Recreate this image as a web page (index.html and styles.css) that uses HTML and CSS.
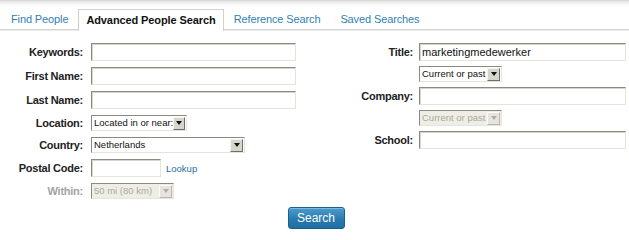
FILE: index.html
```html
<!DOCTYPE html>
<html>
<head>
<meta charset="utf-8">
<link rel="stylesheet" href="styles.css">
</head>
<body>
<div class="tabbar">
  <ul class="tabs">
    <li class="tab"><a href="#">Find People</a></li>
    <li class="tab active"><span>Advanced People Search</span></li>
    <li class="tab"><a href="#">Reference Search</a></li>
    <li class="tab"><a href="#">Saved Searches</a></li>
  </ul>
</div>
<form class="search">
  <div class="columns">
    <div class="col col-left">
      <label class="lbl">Keywords:</label>
      <input class="txt w-wide" type="text">
      <label class="lbl">First Name:</label>
      <input class="txt w-wide" type="text">
      <label class="lbl">Last Name:</label>
      <input class="txt w-wide" type="text">
      <label class="lbl">Location:</label>
      <div class="sel w-loc"><span class="val">Located in or near:</span><span class="btn"><i></i></span></div>
      <label class="lbl">Country:</label>
      <div class="sel w-country"><span class="val">Netherlands</span><span class="btn"><i></i></span></div>
      <label class="lbl">Postal Code:</label>
      <div class="postal"><input class="txt w-postal" type="text"><a class="lookup" href="#">Lookup</a></div>
      <label class="lbl disabled">Within:</label>
      <div class="sel w-small is-disabled"><span class="val">50 mi (80 km)</span><span class="btn"><i></i></span></div>
    </div>
    <div class="col col-right">
      <label class="lbl">Title:</label>
      <input class="txt w-wide2" type="text" value="marketingmedewerker">
      <span></span>
      <div class="sel w-small"><span class="val">Current or past</span><span class="btn"><i></i></span></div>
      <label class="lbl">Company:</label>
      <input class="txt w-wide2" type="text">
      <span></span>
      <div class="sel w-small is-disabled"><span class="val">Current or past</span><span class="btn"><i></i></span></div>
      <label class="lbl">School:</label>
      <input class="txt w-wide2" type="text">
    </div>
  </div>
  <div class="actions">
    <button type="button" class="search-btn">Search</button>
  </div>
</form>
</body>
</html>
```
FILE: styles.css
```css
html, body {
  margin: 0;
  padding: 0;
  background: #fff;
  font-family: "Liberation Sans", Arial, sans-serif;
}

.tabbar {
  height: 29px;
  background: linear-gradient(#d4d4d4 0px, #ececec 2px, #fbfbfb 5px, #fff 8px);
  border-bottom: 1px solid #d2d2d2;
  box-shadow: 0 1px 0 #ececec;
}

.tabs {
  list-style: none;
  margin: 0;
  padding: 9px 0 0 1px;
  display: flex;
  height: 20px;
}

.tab {
  font-size: 11px;
  line-height: 20px;
  padding: 0 10px;
  letter-spacing: -0.12px;
}

.tab a {
  color: #2f7fb4;
  text-decoration: none;
}

.tab.active {
  background: #fff;
  border: 1px solid #d0d0d0;
  border-bottom: none;
  height: 21px;
  padding: 0 7px;
  font-weight: bold;
  color: #111;
  letter-spacing: -0.1px;
}

.search {
  padding-top: 13px;
}

.columns {
  display: flex;
  gap: 34px;
}

.col {
  display: grid;
  align-items: center;
  align-content: start;
}

.col-left {
  grid-template-columns: 83px auto;
  column-gap: 8px;
  row-gap: 6px;
}

.col-right {
  grid-template-columns: 83px auto;
  column-gap: 6px;
  row-gap: 5px;
}

.lbl {
  font-size: 11px;
  font-weight: bold;
  color: #222;
  text-align: right;
  letter-spacing: -0.25px;
}

.lbl.disabled {
  color: #a3a3a3;
}

.txt {
  box-sizing: border-box;
  height: 18px;
  margin: 0;
  padding: 0 2px;
  border: 1px solid;
  border-color: #8a8a82 #e5e4da #e5e4da #8a8a82;
  box-shadow: inset 1px 1px 0 #d6d5cc;
  background: #fff;
  font-family: "Liberation Sans", Arial, sans-serif;
  font-size: 11px;
  color: #111;
  outline: none;
}

.w-wide { width: 205px; }
.w-wide2 { width: 207px; }
.w-postal { width: 70px; }

.postal {
  display: flex;
  align-items: center;
  gap: 5px;
}

.lookup {
  font-size: 9.5px;
  color: #1f6fa6;
  text-decoration: none;
}

.sel {
  box-sizing: border-box;
  height: 16px;
  display: flex;
  align-items: center;
  justify-content: space-between;
  border: 1px solid;
  border-color: #8a8a82 #e5e4da #e5e4da #8a8a82;
  background: #fff;
  padding: 1px 1px 1px 2px;
}

.sel .val {
  font-size: 9.5px;
  color: #111;
  white-space: nowrap;
  line-height: 12px;
}

.sel .btn {
  box-sizing: border-box;
  width: 13px;
  height: 13px;
  background: #d8d5cc;
  border: 1px solid;
  border-color: #f4f3ee #6e6d66 #6e6d66 #f4f3ee;
  display: flex;
  align-items: center;
  justify-content: center;
}

.sel .btn i {
  width: 0;
  height: 0;
  border-left: 3px solid transparent;
  border-right: 3px solid transparent;
  border-top: 4px solid #111;
}

.w-loc { width: 96px; }
.w-country { width: 154px; }
.w-small { width: 83px; }

.sel.is-disabled {
  background: #efeee6;
}

.sel.is-disabled .val {
  color: #aaa89c;
}

.sel.is-disabled .btn {
  background: #e6e4dc;
  border-color: #fbfaf6 #b9b8b0 #b9b8b0 #fbfaf6;
}

.sel.is-disabled .btn i {
  border-top-color: #b0aea4;
}

.actions {
  display: flex;
  justify-content: center;
  padding: 8px 0 0 3px;
}

.search-btn {
  width: 57px;
  height: 22px;
  border: 1px solid #1b5f8f;
  border-radius: 3px;
  background: linear-gradient(#4b9ccd, #2a7bb0 55%, #1f6ea3);
  color: #fff;
  font-family: "Liberation Sans", Arial, sans-serif;
  font-size: 12px;
  padding: 0;
  box-shadow: inset 0 1px 0 rgba(255,255,255,0.3);
}
```
